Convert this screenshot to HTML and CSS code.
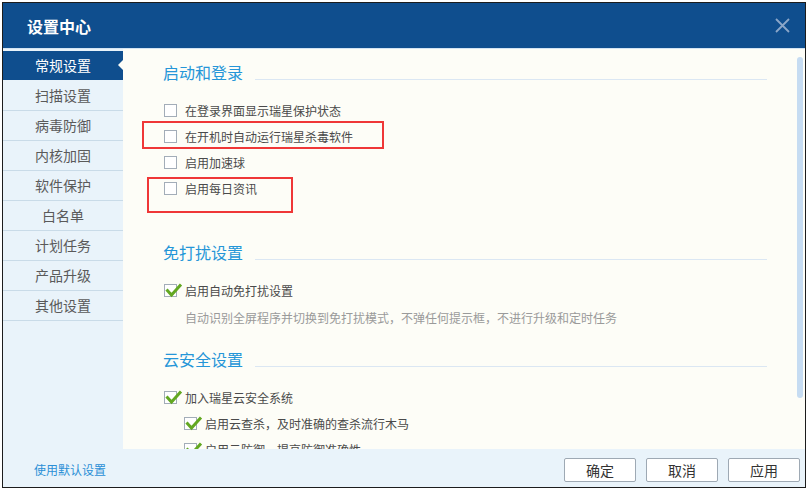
FILE: index.html
```html
<!DOCTYPE html>
<html lang="zh-CN">
<head>
<meta charset="utf-8">
<title>设置中心</title>
<link rel="stylesheet" href="styles.css">
</head>
<body>
<div class="window">
  <header class="titlebar">
    <h1 class="title">设置中心</h1>
    <svg class="close" width="15" height="15" viewBox="0 0 15 15"><path d="M1 1 L14 14 M14 1 L1 14" stroke="#8ba6c8" stroke-width="1.8" fill="none"/></svg>
  </header>
  <div class="main">
    <nav class="sidebar">
      <div class="nav-item active">常规设置</div>
      <div class="nav-item">扫描设置</div>
      <div class="nav-item">病毒防御</div>
      <div class="nav-item">内核加固</div>
      <div class="nav-item">软件保护</div>
      <div class="nav-item">白名单</div>
      <div class="nav-item">计划任务</div>
      <div class="nav-item">产品升级</div>
      <div class="nav-item">其他设置</div>
    </nav>
    <section class="content">
      <div class="group">
        <div class="group-title"><span>启动和登录</span><i class="rule"></i></div>
        <div class="opt"><span class="box"></span>在登录界面显示瑞星保护状态</div>
        <div class="opt"><span class="box"></span>在开机时自动运行瑞星杀毒软件</div>
        <div class="opt"><span class="box"></span>启用加速球</div>
        <div class="opt"><span class="box"></span>启用每日资讯</div>
      </div>
      <div class="group g2">
        <div class="group-title"><span>免打扰设置</span><i class="rule"></i></div>
        <div class="opt"><span class="box checked"><svg class="tick" width="20" height="17" viewBox="0 0 20 17"><path d="M3.5 8.5 L8.5 14 L18 3.5" stroke="#63a822" stroke-width="3" fill="none"/></svg></span>启用自动免打扰设置</div>
        <div class="desc">自动识别全屏程序并切换到免打扰模式，不弹任何提示框，不进行升级和定时任务</div>
      </div>
      <div class="group g3">
        <div class="group-title"><span>云安全设置</span><i class="rule"></i></div>
        <div class="opt"><span class="box checked"><svg class="tick" width="20" height="17" viewBox="0 0 20 17"><path d="M3.5 8.5 L8.5 14 L18 3.5" stroke="#63a822" stroke-width="3" fill="none"/></svg></span>加入瑞星云安全系统</div>
        <div class="opt sub"><span class="box checked"><svg class="tick" width="20" height="17" viewBox="0 0 20 17"><path d="M3.5 8.5 L8.5 14 L18 3.5" stroke="#63a822" stroke-width="3" fill="none"/></svg></span>启用云查杀，及时准确的查杀流行木马</div>
        <div class="opt sub"><span class="box checked"><svg class="tick" width="20" height="17" viewBox="0 0 20 17"><path d="M3.5 8.5 L8.5 14 L18 3.5" stroke="#63a822" stroke-width="3" fill="none"/></svg></span>启用云防御，提高防御准确性</div>
      </div>
      <div class="scrollbar"></div>
      <div class="mark mark-a"></div>
      <div class="mark mark-b"></div>
    </section>
  </div>
  <footer class="footer">
    <a class="reset">使用默认设置</a>
    <div class="buttons">
      <button class="btn">确定</button>
      <button class="btn">取消</button>
      <button class="btn">应用</button>
    </div>
  </footer>
</div>
</body>
</html>
```
FILE: styles.css
```css
* { box-sizing: border-box; }
html, body { margin: 0; }
body {
  padding: 2px 0 0 2px;
  background: #ffffff;
  font-family: "Noto Sans CJK SC", "Microsoft YaHei", sans-serif;
}
.window {
  width: 804px;
  height: 486px;
  border: 1px solid #1c1c1c;
  display: grid;
  grid-template-rows: 45px 401px 38px;
  background: #e9f3fa;
  overflow: hidden;
}
.titlebar {
  background: #0f4e8e;
  display: flex;
  align-items: center;
  justify-content: space-between;
  padding: 0 15px 0 24px;
}
.title {
  margin: 0;
  color: #ffffff;
  font-size: 16px;
  font-weight: bold;
  line-height: 20px;
}
.close { display: block; }
.main {
  display: grid;
  grid-template-columns: 120px 1fr;
  border-top: 1px solid #d3e4f3;
  min-height: 0;
}
.sidebar {
  padding-top: 2px;
  background: #e9f3fa;
}
.nav-item {
  position: relative;
  height: 30px;
  line-height: 29px;
  border-bottom: 1px solid #c9dbe8;
  text-align: center;
  font-size: 14px;
  color: #5a5a5a;
}
.nav-item.active {
  background: #0f4e8e;
  color: #ffffff;
  border-bottom-color: #e9f3fa;
}
.nav-item.active::after {
  content: "";
  position: absolute;
  right: 0;
  top: 9px;
  border-style: solid;
  border-width: 5px 5px 5px 0;
  border-color: transparent #fdfdf7 transparent transparent;
}
.content {
  position: relative;
  overflow: hidden;
  background: #fdfdf7;
  padding: 13px 38px 0 40px;
}
.group-title {
  display: flex;
  align-items: flex-start;
  gap: 12px;
  height: 20px;
  line-height: 20px;
  font-size: 16px;
  color: #2596d8;
  margin-bottom: 15px;
}
.rule {
  flex: 1;
  height: 1px;
  margin-top: 17px;
  background: #dbe7f3;
}
.g2 { margin-top: 41px; }
.g3 { margin-top: 21px; }
.opt {
  display: flex;
  align-items: center;
  height: 26px;
  font-size: 12px;
  color: #4a4a4a;
}
.opt.sub { padding-left: 20px; }
.box {
  position: relative;
  width: 13px;
  height: 13px;
  margin-left: 1px;
  margin-right: 8px;
  border: 1px solid #a3adb8;
  background: #ffffff;
  flex: none;
}
.tick {
  position: absolute;
  left: -2px;
  top: -4px;
}
.desc {
  margin-top: 5px;
  padding-left: 22px;
  font-size: 12px;
  line-height: 20px;
  color: #9a9a9a;
}
.scrollbar {
  position: absolute;
  right: 2px;
  top: 8px;
  width: 6px;
  height: 341px;
  border-radius: 3px;
  background: #c6dcf2;
}
.mark {
  position: absolute;
  border: 2px solid #ef3737;
}
.mark-a { left: 19px; top: 72px; width: 242px; height: 28px; }
.mark-b { left: 24px; top: 128px; width: 146px; height: 36px; }
.footer {
  display: flex;
  align-items: flex-start;
  padding: 9px 5px 0 31px;
  background: #e9f3fa;
}
.reset {
  font-size: 12px;
  line-height: 24px;
  color: #2b8fd6;
}
.buttons {
  margin-left: auto;
  display: flex;
  gap: 10px;
}
.btn {
  width: 72px;
  height: 24px;
  padding: 0;
  border: 1px solid #9ea9b4;
  border-radius: 2px;
  background: #ffffff;
  font-family: inherit;
  font-size: 14px;
  line-height: 22px;
  color: #333333;
}
```
